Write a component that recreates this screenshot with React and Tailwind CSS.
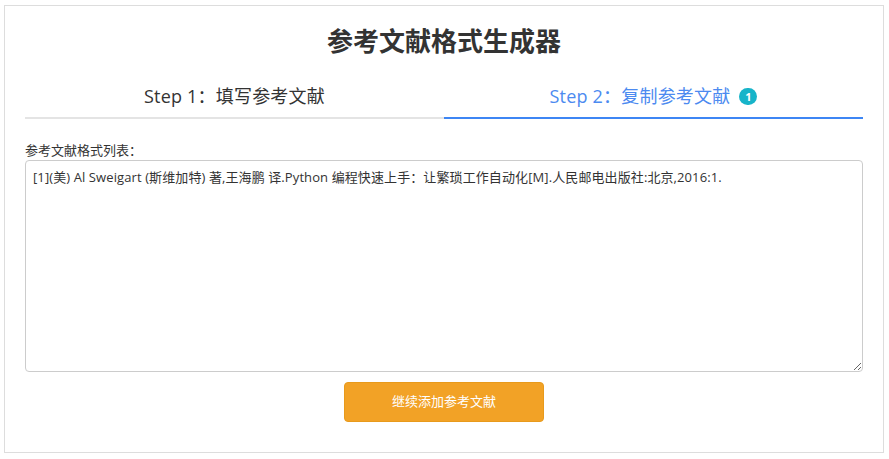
// 参考文献格式生成器 — 第二步：复制参考文献
const FONT = { fontFamily: '"Open Sans", "Noto Sans CJK SC", sans-serif' };

const REFS = [
  '[1](美) Al Sweigart (斯维加特) 著,王海鹏 译.Python 编程快速上手：让繁琐工作自动化[M].人民邮电出版社:北京,2016:1.',
];

export default function App() {
  return (
    <div className="bg-white w-[889px] h-[459px] pt-[5px] pl-[4px]" style={FONT}>
      <div className="w-[880px] h-[448px] border border-[#dddddd] px-5 flex flex-col">
        {/* ── Título ── */}
        <h1 className="text-center text-[26px] font-bold text-[#333333] leading-none mt-[22px] h-[30px]">
          参考文献格式生成器
        </h1>

        {/* ── Pestañas ── */}
        <div className="flex mt-[27px]">
          <div className="flex-1 h-[34px] border-b-2 border-[#e4e4e4] flex items-start justify-center">
            <span className="text-[18px] leading-[22px] text-[#333333] tracking-[0.2px]">Step 1：填写参考文献</span>
          </div>
          <div className="flex-1 h-[34px] border-b-2 border-[#3d86f4] flex items-start justify-center gap-[9px]">
            <span className="text-[18px] leading-[22px] text-[#4c8af0] tracking-[0.2px]">Step 2：复制参考文献</span>
            <span className="mt-[3px] w-[18px] h-[17px] rounded-full bg-[#17b4c9] text-white text-[11px] font-bold leading-[17px] text-center">
              1
            </span>
          </div>
        </div>

        {/* ── Lista ── */}
        <label className="mt-[23px] text-[13px] leading-[16px] text-[#333333]">参考文献格式列表：</label>
        <textarea
          readOnly
          value={REFS.join('\n')}
          className="mt-[2px] w-full h-[212px] border border-[#cccccc] rounded-[4px] px-[7px] py-[6px] text-[13px] leading-[20px] text-[#333333] tracking-[0.1px] outline-none resize-y"
          style={FONT}
        />

        {/* ── Botón ── */}
        <div className="flex justify-center mt-[10px]">
          <button
            type="button"
            className="w-[200px] h-[40px] bg-[#f2a226] border border-[#e89a1c] rounded-[4px] text-white text-[13px]"
          >
            继续添加参考文献
          </button>
        </div>
      </div>
    </div>
  );
}
